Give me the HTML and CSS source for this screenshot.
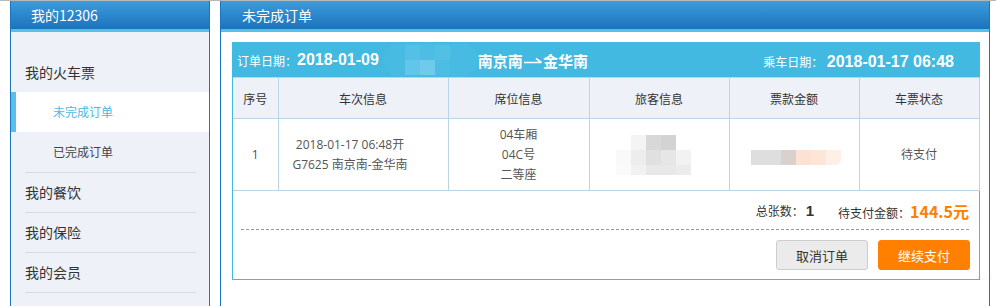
FILE: index.html
```html
<!DOCTYPE html>
<html lang="zh-CN">
<head>
    <meta charset="UTF-8">
    <meta name="viewport" content="width=device-width, initial-scale=1.0">
    <title>我的12306 - 未完成订单</title>
    <link rel="stylesheet" href="styles.css">
</head>
<body>
    <div class="page">
        <aside class="sidebar">
            <div class="panel-title">我的12306</div>
            <div class="sidebar-body">
                <div class="menu-group">
                    <div class="menu-title">我的火车票</div>
                    <a class="menu-sub active">未完成订单</a>
                    <a class="menu-sub">已完成订单</a>
                </div>
                <div class="menu-group">
                    <div class="menu-title">我的餐饮</div>
                </div>
                <div class="menu-group">
                    <div class="menu-title">我的保险</div>
                </div>
                <div class="menu-group">
                    <div class="menu-title">我的会员</div>
                </div>
                <div class="menu-group">
                    <div class="menu-title">个人信息</div>
                </div>
            </div>
        </aside>

        <main class="main-panel">
            <div class="panel-title">未完成订单</div>
            <div class="main-body">
                <div class="order-box">
                    <div class="order-head">
                        <span class="head-label">订单日期：</span>
                        <span class="head-date">2018-01-09</span>
                        <span class="mosaic mosaic-head">
                            <i class="h0"></i><i class="h1"></i><i class="h2"></i><i class="h3"></i><i class="h0"></i><i class="h0"></i>
                            <i class="h0"></i><i class="h4"></i><i class="h5"></i><i class="h2"></i><i class="h0"></i><i class="h0"></i>
                        </span>
                        <span class="route">南京南<svg class="arrow" width="18" height="10" viewBox="0 0 18 10"><path d="M0 7.5H17.5M12 3.5L17.5 7.5" stroke="#fff" stroke-width="1.6" fill="none"/></svg>金华南</span>
                        <span class="ride">
                            <span class="head-label">乘车日期：</span>
                            <span class="head-date">2018-01-17 06:48</span>
                        </span>
                    </div>

                    <table class="order-table">
                        <thead>
                            <tr>
                                <th class="col-no">序号</th>
                                <th class="col-train">车次信息</th>
                                <th class="col-seat">席位信息</th>
                                <th class="col-pass">旅客信息</th>
                                <th class="col-price">票款金额</th>
                                <th class="col-state">车票状态</th>
                            </tr>
                        </thead>
                        <tbody>
                            <tr>
                                <td class="num">1</td>
                                <td class="train">2018-01-17 06:48开<br>G7625 南京南-金华南</td>
                                <td>04车厢<br>04C号<br>二等座</td>
                                <td>
                                    <span class="mosaic mosaic-pass">
                                        <i></i><i class="p1"></i><i class="p2"></i><i class="p3"></i><i></i>
                                        <i class="p4"></i><i class="p5"></i><i class="p6"></i><i class="p7"></i><i class="p8"></i>
                                        <i class="p9"></i><i class="p10"></i><i class="p11"></i><i class="p11"></i><i class="p12"></i>
                                    </span>
                                </td>
                                <td>
                                    <span class="mosaic mosaic-price">
                                        <i class="q1"></i><i class="q1"></i><i class="q2"></i><i class="q3"></i><i class="q4"></i><i class="q5"></i>
                                    </span>
                                </td>
                                <td>待支付</td>
                            </tr>
                        </tbody>
                    </table>

                    <div class="order-sum">
                        <span>总张数：<b class="count">1</b></span>
                        <span>待支付金额：<b class="price">144.5元</b></span>
                    </div>
                    <div class="order-actions">
                        <button class="btn btn-cancel">取消订单</button>
                        <button class="btn btn-pay">继续支付</button>
                    </div>
                </div>
            </div>
        </main>
    </div>
</body>
</html>
```

FILE: styles.css
```css
:root {
    --head-top: #3b9cdc;
    --head-bottom: #1c73bd;
    --head-line: #58bfe9;
    --frame: #1b76c2;
    --menu-bg: #eef1f8;
    --sky: #41b9e1;
    --cell-line: #bad6e5;
    --orange: #ff8000;
    --text: #333;
}

* {
    margin: 0;
    padding: 0;
    box-sizing: border-box;
}

body {
    font-family: "Noto Sans CJK SC", sans-serif;
    color: var(--text);
    background: #fff;
    border-top: 1px solid #b8b8b8;
    height: 100vh;
    overflow: hidden;
}

.page {
    display: flex;
    gap: 10px;
    padding-left: 10px;
    height: 100%;
}

.panel-title {
    height: 31px;
    line-height: 28px;
    font-size: 14px;
    color: #fff;
    background: linear-gradient(to bottom, var(--head-top), var(--head-bottom));
    border-bottom: 3px solid var(--head-line);
}

/* sidebar */

.sidebar {
    width: 200px;
    border-left: 1px solid var(--frame);
    border-right: 1px solid var(--frame);
    background: var(--menu-bg);
    overflow: hidden;
}

.sidebar .panel-title {
    padding-left: 20px;
}

.sidebar-body {
    padding-top: 20px;
}

.menu-group::after {
    content: "";
    display: block;
    height: 1px;
    margin: 0 13px 0 14px;
    background: #d8dce3;
}

.menu-title {
    height: 39px;
    line-height: 39px;
    padding-left: 14px;
    font-size: 14px;
    color: #333;
}

.menu-group:first-child .menu-title {
    height: 40px;
    line-height: 40px;
}

.menu-sub {
    display: block;
    height: 40px;
    line-height: 40px;
    padding-left: 42px;
    font-size: 12px;
    color: #444;
}

.menu-sub.active {
    background: #fff;
    color: #4cb8e4;
    border-left: 5px solid var(--head-line);
    padding-left: 37px;
}

/* main */

.main-panel {
    width: 770px;
    border-left: 1px solid var(--frame);
    border-right: 1px solid var(--frame);
}

.main-panel .panel-title {
    padding-left: 21px;
}

.main-body {
    padding: 10px 9px 0 11px;
}

.order-box {
    border: 1px solid var(--sky);
}

.order-head {
    display: flex;
    align-items: center;
    height: 34px;
    padding: 0 25px 0 4px;
    background: var(--sky);
    color: #fff;
}

.head-label {
    font-size: 12px;
}

.head-date {
    font-family: "Liberation Sans", sans-serif;
    font-weight: bold;
    font-size: 16px;
}

.mosaic-head {
    margin: 0 0 0 4px;
    width: 95px;
    height: 34px;
    padding: 2px 0 0 7px;
    border-radius: 17px;
    background: #47bbe2;
}

.route {
    display: flex;
    align-items: center;
    font-size: 15px;
    font-weight: bold;
}

.arrow {
    margin: 0 1px;
}

.ride {
    margin-left: auto;
}

.mosaic {
    display: inline-grid;
    grid-auto-rows: 15px;
}

.mosaic-head {
    grid-template-columns: repeat(6, 15px);
}

.h1 { background: #55c0e6; }
.h2 { background: #4dbde4; }
.h3 { background: #52bfe5; }
.h4 { background: #62c6ea; }
.h5 { background: #6fcaeb; }

.order-table {
    width: 100%;
    border-collapse: collapse;
    table-layout: fixed;
    font-size: 12px;
}

.order-table th,
.order-table td {
    border: 1px solid var(--cell-line);
    text-align: center;
    vertical-align: middle;
}

.order-table tr > :first-child {
    border-left: none;
}

.order-table th {
    height: 41px;
    font-weight: normal;
    color: #333;
    background: var(--menu-bg);
}

.order-table td {
    height: 72px;
    line-height: 20px;
    color: #555;
    font-family: "Open Sans", "Noto Sans CJK SC", sans-serif;
}

.order-table td.train {
    padding-right: 26px;
}

.col-no { width: 45px; }
.col-train { width: 170px; }
.col-seat { width: 141px; }
.col-pass { width: 140px; }
.col-price { width: 130px; }
.col-state { width: 120px; }

.order-table td.num {
    color: #4f4a88;
}

.mosaic-pass {
    grid-template-columns: repeat(5, 15px);
    grid-template-rows: 15px 15px 10px;
    vertical-align: middle;
    margin-right: 12px;
}

.p1 { background: #f4f4f4; }
.p2 { background: #d8d8d8; }
.p3 { background: #d3d3d3; }
.p4 { background: #f9f9f9; }
.p5 { background: #ededed; }
.p6 { background: #e0e0e0; }
.p7 { background: #e6e6e6; }
.p8 { background: #f2f2f2; }
.p9 { background: #fafafa; }
.p10 { background: #f1f1f1; }
.p11 { background: #e8e8e8; }
.p12 { background: #ececec; }

.mosaic-price {
    grid-template-columns: repeat(6, 15px);
    vertical-align: middle;
    margin: 6px 0 0 4px;
}

.q1 { background: #dedede; }
.q2 { background: #dad1cc; }
.q3 { background: #fde2d4; }
.q4 { background: #fde5d8; }
.q5 { background: #fef0e6; border-bottom-right-radius: 6px; }

.order-sum {
    display: flex;
    justify-content: flex-end;
    gap: 24px;
    margin: 0 10px 0 8px;
    padding: 10px 0 6px;
    line-height: 20px;
    font-size: 12px;
    border-bottom: 1px dashed #999;
}

.count {
    font-family: "Liberation Sans", sans-serif;
    font-size: 15px;
    color: #333;
    margin-left: 2px;
}

.price {
    font-size: 16px;
    color: var(--orange);
}

.order-actions {
    display: flex;
    justify-content: flex-end;
    gap: 10px;
    padding: 10px 9px 9px 0;
}

.btn {
    width: 92px;
    height: 30px;
    border-radius: 3px;
    font-family: "Noto Sans CJK SC", sans-serif;
    font-size: 13px;
    cursor: pointer;
}

.btn-cancel {
    background: #ebebeb;
    border: 1px solid #cdcdcd;
    color: #333;
}

.btn-pay {
    background: var(--orange);
    border: 1px solid var(--orange);
    color: #fff;
}
```
